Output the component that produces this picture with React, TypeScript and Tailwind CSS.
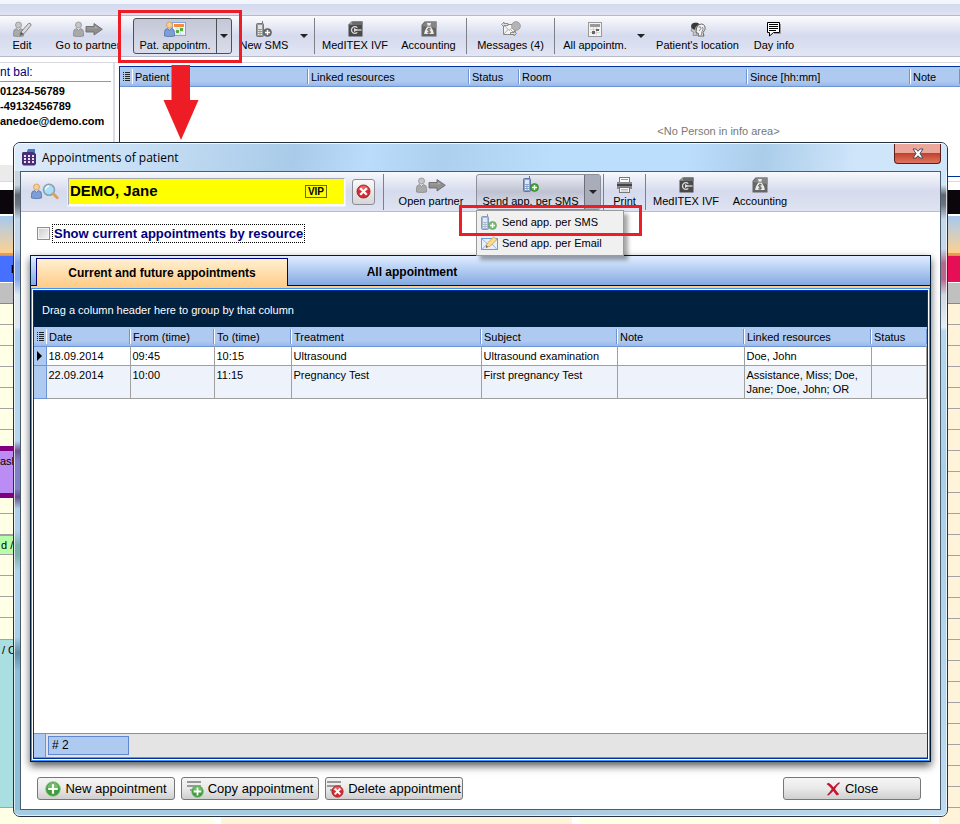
import type { ReactNode } from 'react'
import clsx from 'clsx'

type Row = {
  date: string
  from: string
  to: string
  treatment: string
  subject: string
  note: string
  resources: string
  status: string
}

const ROWS: Row[] = [
  { date: '18.09.2014', from: '09:45', to: '10:15', treatment: 'Ultrasound', subject: 'Ultrasound examination', note: '', resources: 'Doe, John', status: '' },
  { date: '22.09.2014', from: '10:00', to: '11:15', treatment: 'Pregnancy Test', subject: 'First pregnancy Test', note: '', resources: 'Assistance, Miss; Doe, Jane; Doe, John; OR', status: '' },
]

const COLUMNS = [
  { label: 'Date',             w: 'w-[84px]' },
  { label: 'From (time)',      w: 'w-[84px]' },
  { label: 'To (time)',        w: 'w-[77px]' },
  { label: 'Treatment',        w: 'w-[190px]' },
  { label: 'Subject',          w: 'w-[136px]' },
  { label: 'Note',             w: 'w-[127px]' },
  { label: 'Linked resources', w: 'w-[127px]' },
  { label: 'Status',           w: '' },
]

const INFO_COLUMNS = [
  { label: 'Patient',          w: 'w-[176px]' },
  { label: 'Linked resources', w: 'w-[161px]' },
  { label: 'Status',           w: 'w-[50px]' },
  { label: 'Room',             w: 'w-[228px]' },
  { label: 'Since [hh:mm]',    w: 'w-[163px]' },
  { label: 'Note',             w: '' },
]

/* ---------- icons ---------- */

function Person({ x = 0, color = false }: { x?: number; color?: boolean }) {
  return (
    <g transform={`translate(${x} 0)`}>
      <path d="M.5 15V11.5Q.5 8 3.5 7.6L5.5 9.4 7.5 7.6Q10.5 8 10.5 11.5V15Q5.5 16.2.5 15Z" fill={color ? '#7d9fd6' : '#a9a9a9'} stroke={color ? '#4b70b0' : '#8a8a8a'} strokeWidth=".8" />
      <circle cx="5.5" cy="4" r="3" fill={color ? '#f7cf93' : '#c6c6c6'} stroke={color ? '#d59a4c' : '#909090'} strokeWidth=".8" />
    </g>
  )
}

function EditIcon() {
  return (
    <svg width="19" height="16" viewBox="0 0 19 16">
      <Person />
      <path d="M7 14.5 8 11 15.5 2.5Q17.5 1.5 18.2 4L11 12.8Z" fill="#dcdcdc" stroke="#777" strokeWidth=".9" />
      <path d="M7 14.5 8 11 10.5 12.8Z" fill="#555" />
    </svg>
  )
}

function PartnerIcon() {
  return (
    <svg width="30" height="16" viewBox="0 0 30 16">
      <Person />
      <path d="M13 5.5H21V2.5L29.3 8.3 21 14V11H13Z" fill="#8f8f8f" stroke="#6c6c6c" strokeWidth=".9" />
      <path d="M14 6.7H22V5L25 7.3H14Z" fill="#b4b4b4" />
    </svg>
  )
}

function PatientCalendarIcon() {
  return (
    <svg width="22" height="16" viewBox="0 0 22 16">
      <rect x="8.5" y="1.5" width="13" height="13" fill="#f2f7ff" stroke="#7fa5de" />
      <rect x="10" y="3" width="10" height="3" fill="#f58d38" />
      <path d="M11 7.5H20M11 10.5H20M11 13H20M13 6V14M16.5 6V14" stroke="#c9dcf6" strokeWidth=".7" />
      <rect x="16" y="7" width="3" height="3" fill="#58ad45" />
      <rect x="12" y="9" width="3" height="3" fill="#58ad45" />
      <Person color />
    </svg>
  )
}

function PhoneIcon({ color = false }: { color?: boolean }) {
  return (
    <svg width="16" height="17" viewBox="0 0 16 17">
      <rect x="6" y="0" width="1" height="4" fill={color ? '#56709c' : '#777'} />
      <rect x=".5" y="2.5" width="7" height="13" rx="1" fill={color ? '#8aa2cc' : '#999'} stroke={color ? '#5d76a3' : '#757575'} />
      <rect x="2" y="4" width="4" height="4" fill={color ? '#dbe8fb' : '#e2e2e2'} />
      <path d="M2 9.5H6M2 11.5H6M2 13.5H6" stroke="#eee" strokeWidth="1" strokeDasharray="1 .5" />
      <circle cx="11.5" cy="11.5" r="4" fill={color ? '#43a536' : '#6d6d6d'} stroke={color ? '#2a7a22' : '#555'} strokeWidth=".6" />
      <path d="M11.5 9V14M9 11.5H14" stroke="#fff" strokeWidth="1.4" />
    </svg>
  )
}

function MedIcon() {
  return (
    <svg width="15" height="16" viewBox="0 0 15 16">
      <path d="M3.5.5H14.5V15.5H.5V3.5Z" fill="#4a4a4a" />
      <path d="M5 .5H14.5V4H1.5Z" fill="#6c6c6c" />
      <path d="M.5 3.5 3.5.5 4.5 3.5Z" fill="#9a9a9a" />
      <path d="M9.3 6.6A3.4 3.4 0 1 0 9.3 11.4" fill="none" stroke="#dcdcdc" strokeWidth="1.3" />
      <path d="M6 9H13.5" stroke="#dcdcdc" strokeWidth="1.3" />
      <path d="M6 7V11L9.5 9Z" fill="#dcdcdc" />
    </svg>
  )
}

function MoneyIcon() {
  return (
    <svg width="16" height="16" viewBox="0 0 16 16">
      <path d="M3.5.5H15.5V15.5H.5V4Z" fill="#666" />
      <path d="M5 .5H15.5V7L1 5Z" fill="#858585" />
      <path d="M6 2H10L9.2 5Q12.8 9.5 12.8 13H3.2Q3.2 9.5 6.8 5Z" fill="#ececec" />
      <path d="M6.5 5.2H9.5" stroke="#777" />
      <path d="M9.8 8Q8 7 6.8 8.1T8 10T9.2 11.6 6.2 11.7M8 6.7V12.7" fill="none" stroke="#555" strokeWidth=".9" />
    </svg>
  )
}

function MessagesIcon() {
  return (
    <svg width="20" height="16" viewBox="0 0 20 16">
      <path d="M2.5 3.5H14.5V13.5H2.5Z" fill="#f4f4f4" stroke="#8a8a8a" />
      <path d="M3 4 8 9.5 14 4M3 13 7 8.5M14 13 9.5 8.5" fill="none" stroke="#999" strokeWidth=".8" />
      <circle cx="15" cy="5" r="4.4" fill="#b4b4b4" stroke="#8f8f8f" strokeWidth=".7" />
      <path d="M13 8.8 12.5 12 16 9Z" fill="#a5a5a5" />
      <path d="M.5 3.5 3 1.2V2.5H7V4.5H3V5.8Z M15.5 12.5 13 10.2V11.5H9.5V13.5H13V14.8Z" fill="#e2e2e2" stroke="#6c6c6c" strokeWidth=".7" />
    </svg>
  )
}

function CalendarIcon() {
  return (
    <svg width="14" height="15" viewBox="0 0 14 15">
      <rect x=".5" y=".5" width="13" height="14" fill="#f3f3f3" stroke="#999" />
      <rect x="2" y="2" width="10" height="3" fill="#999" />
      <path d="M2 7.5H12M2 10.5H12M5.5 5V13M8.5 5V13" stroke="#c8c8c8" strokeWidth=".7" />
      <rect x="8" y="7" width="3" height="2" fill="#666" />
      <rect x="4" y="9" width="3" height="3" fill="#666" />
    </svg>
  )
}

function HeadsIcon() {
  return (
    <svg width="16" height="15" viewBox="0 0 16 15">
      <path d="M3 13.5 3.5 10 1 9 1.8 6Q.5 1.5 6 1 8.5 1 9 3L6 6 7 13.5Z" fill="#c4c4c4" stroke="#777" strokeWidth=".6" />
      <path d="M1.5 6Q0 .5 6.5.8 9.5 1 9.3 3.3L6 4.5 4.5 8Z" fill="#383838" />
      <path d="M8 14 8.5 11.5 6 10.5 6.5 6Q7 2 11.5 2 15.7 2.5 15 7.5L13 10.5 14 14Z" fill="#f1f1f1" stroke="#555" strokeWidth=".9" />
      <path d="M8.5 5Q11 4 11 6.5L9 9M12.5 5Q14 7 12 9.5L11.5 13" fill="none" stroke="#777" strokeWidth=".9" />
    </svg>
  )
}

function NoteIcon() {
  return (
    <svg width="14" height="15" viewBox="0 0 14 15">
      <path d="M13.5 2V11.5H7" fill="none" stroke="#999" />
      <path d="M.5.5H12.5V10.5H6.5L2.5 14V10.5H.5Z" fill="#fff" stroke="#000" />
      <path d="M2 2.5H11M2 4.5H11M2 6.5H11M2 8.5H9" stroke="#000" />
    </svg>
  )
}

function PrinterIcon() {
  return (
    <svg width="17" height="16" viewBox="0 0 17 16">
      <rect x="3.5" y=".5" width="10" height="5" fill="#fff" stroke="#777" />
      <path d="M5 2.5H12" stroke="#999" />
      <path d="M1 5H16V12H1Z" fill="#8a8a8a" />
      <rect x="1" y="7" width="15" height="2" fill="#444" />
      <rect x="3.5" y="10.5" width="10" height="5" fill="#fafafa" stroke="#777" />
      <path d="M5 12.5H12M5 14H12" stroke="#aaa" strokeWidth=".8" />
    </svg>
  )
}

function EnvelopeIcon() {
  return (
    <svg width="17" height="15" viewBox="0 0 17 15">
      <rect x=".5" y="2.5" width="16" height="11" fill="#e6f0fd" stroke="#6d9bd9" />
      <path d="M1 3 8.5 9.5 16 3M1 13.5 6 8M16 13.5 11 8" fill="none" stroke="#8fb3e4" />
      <path d="M5 11.5 5.8 8 12.5.8 16 3.5 9 10.3Z" fill="#fbdb8b" stroke="#d39d43" strokeWidth=".8" />
      <path d="M5 11.5 5.5 9.5 7 11Z" fill="#444" />
    </svg>
  )
}

function PatientSearchIcon() {
  return (
    <svg width="28" height="17" viewBox="0 0 28 17">
      <Person color />
      <circle cx="18" cy="6.7" r="5.5" fill="#a9dff9" stroke="#8ba0b1" strokeWidth="1.6" />
      <path d="M14.5 6.5Q15 3.5 18 3.2" fill="none" stroke="#fff" strokeWidth="1.3" />
      <path d="M22.2 10.8 26.2 14.8" stroke="#d8a05a" strokeWidth="2.8" strokeLinecap="round" />
    </svg>
  )
}

function CrossBadge({ size = 16 }: { size?: number }) {
  return (
    <svg width={size} height={size} viewBox="0 0 16 16">
      <circle cx="8" cy="8" r="7" fill="#d12c33" stroke="#9f161c" strokeWidth=".8" />
      <path d="M2.5 6Q4 1.8 8 1.8T13.5 6Q8 8 2.5 6Z" fill="#ea7d7f" opacity=".7" />
      <path d="M4.5 4.5 11.5 11.5M11.5 4.5 4.5 11.5" stroke="#fff" strokeWidth="2.4" />
    </svg>
  )
}

function PlusBadge({ size = 16 }: { size?: number }) {
  return (
    <svg width={size} height={size} viewBox="0 0 16 16">
      <circle cx="8" cy="8" r="7.3" fill="#3d9f3a" stroke="#8cbf88" strokeWidth=".9" />
      <path d="M2.2 6.5Q3.6 1.6 8 1.6T13.8 6.5Q8 9 2.2 6.5Z" fill="#8fd083" opacity=".6" />
      <path d="M8 3.2V12.8M3.2 8H12.8" stroke="#fff" strokeWidth="2.2" />
    </svg>
  )
}

function LinesIcon({ children }: { children: ReactNode }) {
  return (
    <span className="relative block h-4 w-[17px]">
      <svg width="17" height="16" viewBox="0 0 17 16">
        <path d="M0 1H14M0 5H14M3 9H9" stroke="#999" strokeWidth="2" />
      </svg>
      <span className="absolute top-1 left-1">{children}</span>
    </span>
  )
}

function RedCross() {
  return (
    <svg width="15" height="14" viewBox="0 0 15 14">
      <path d="M.5 2 2.5.8Q5.5 2.5 7.5 5.3 10 2 13 .3L14 1Q11 3.5 9 7 11 10 13.2 12.3L10.8 13.6Q8.8 11.5 7.3 9 5 11.5 2.5 13.6L1 13Q4 10 5.7 7 3.5 4 .5 2Z" fill="#c4122f" />
    </svg>
  )
}

function AppIcon() {
  return (
    <svg width="14" height="17" viewBox="0 0 14 17">
      <path d="M5 2 6 0H13V8H5Z" fill="#3f79c4" />
      <path d="M1 3H11L14 5V15L12.5 16.5H1.5L0 15V4Z" fill="#4c2c74" />
      <path d="M2 7H12M2 10H12M2 13H12" stroke="#e9e2f2" strokeWidth="2" strokeDasharray="2 2" />
    </svg>
  )
}

function ListMark() {
  return (
    <svg width="7" height="10" viewBox="0 0 7 10">
      <path d="M0 .5H1M2 .5H7M0 2.5H1M2 2.5H7M0 4.5H1M2 4.5H7M0 6.5H1M2 6.5H7M0 8.5H1M2 8.5H7" stroke="#222" />
    </svg>
  )
}

function DownArrow() {
  return (
    <svg width="8" height="4" viewBox="0 0 8 4">
      <path d="M0 0H8L4 4Z" fill="#222" />
    </svg>
  )
}

/* ---------- toolbar pieces ---------- */

function ToolButton({ icon, label, w }: { icon: ReactNode; label: string; w: string }) {
  return (
    <button type="button" className={clsx('flex h-9 shrink-0 flex-col items-center pt-[3px] whitespace-nowrap', w)}>
      <span className="flex h-4 items-center">{icon}</span>
      <span className="leading-4">{label}</span>
    </button>
  )
}

function ArrowButton({ label }: { label: string }) {
  return (
    <button type="button" aria-label={label} className="flex h-9 w-4 shrink-0 items-center justify-center">
      <DownArrow />
    </button>
  )
}

function Separator() {
  return <div className="mx-[2px] h-9 w-px shrink-0 bg-[#7d8089]" />
}

function HeaderLabel({ children }: { children: ReactNode }) {
  return (
    <div className="my-[2px] h-[15px] border-r border-r-[#6f94d6] border-l border-l-white pl-[2px] text-left leading-[17px] font-normal whitespace-nowrap">
      {children}
    </div>
  )
}

function ActionButton({ icon, label }: { icon: ReactNode; label: string }) {
  return (
    <button
      type="button"
      className="flex h-[23px] w-[138px] items-center justify-center gap-1 rounded-[3px] border border-[#777] bg-linear-to-b from-[#f5f5f5] via-[#e9e9e9] to-[#cfcfcf] text-[13px] leading-5 whitespace-nowrap"
    >
      {icon}
      {label}
    </button>
  )
}

/* ---------- main window ---------- */

function MainToolbar() {
  return (
    <div className="flex h-[41px] items-center border-b border-[#b6b9cc] bg-linear-to-b from-[#fbfbfe] via-[#d5daed] to-[#e2e6f4] pl-1">
      <ToolButton icon={<EditIcon />} label="Edit" w="w-9" />
      <div className="ml-2 flex">
        <ToolButton icon={<PartnerIcon />} label="Go to partner" w="w-20" />
      </div>
      <div className="relative ml-[5px] flex shrink-0 rounded-[3px] border border-[#4d5057] bg-linear-to-b from-[#c3c7d6] to-[#d9ddeb]">
        <button type="button" className="flex w-[82px] flex-col items-center pt-[2px] whitespace-nowrap">
          <span className="flex h-4 items-center"><PatientCalendarIcon /></span>
          <span className="leading-4">Pat. appointm.</span>
        </button>
        <button type="button" aria-label="More patient appointments" className="flex w-[15px] items-center justify-center border-l border-[#4d5057]">
          <DownArrow />
        </button>
        <div className="pointer-events-none absolute -top-[9px] -left-4 z-20 h-[53px] w-[124px] border-[3px] border-[#ee1c24]" />
        <svg className="pointer-events-none absolute top-[46px] left-[29px] z-20" width="36" height="75" viewBox="0 0 36 75">
          <path d="M8.5 0H27V35H35.5L18 75 .5 35H8.5Z" fill="#ee1c24" />
        </svg>
      </div>
      <ToolButton icon={<PhoneIcon />} label="New SMS" w="w-16" />
      <ArrowButton label="More SMS actions" />
      <Separator />
      <ToolButton icon={<MedIcon />} label="MedITEX IVF" w="w-[76px]" />
      <ToolButton icon={<MoneyIcon />} label="Accounting" w="w-[71px]" />
      <Separator />
      <ToolButton icon={<MessagesIcon />} label="Messages (4)" w="w-[83px]" />
      <Separator />
      <ToolButton icon={<CalendarIcon />} label="All appointm." w="w-[76px]" />
      <ArrowButton label="More appointments" />
      <ToolButton icon={<HeadsIcon />} label="Patient's location" w="w-[97px]" />
      <ToolButton icon={<NoteIcon />} label="Day info" w="w-[56px]" />
    </div>
  )
}

function InfoArea() {
  return (
    <div className="flex h-[120px] border-y border-[#d8d9e2] bg-white">
      <div className="w-[115px] shrink-0 overflow-hidden border-r-2 border-[#dcdde5] whitespace-nowrap">
        <div className="mr-[2px] h-[19px] border-b border-[#999] text-[12px] leading-[18px] text-[#00007d]">nt bal:</div>
        <div className="pt-[2px] font-bold">
          <p className="leading-[15px]">01234-56789</p>
          <p className="leading-[15px]">-49132456789</p>
          <p className="leading-[15px]">anedoe@demo.com</p>
        </div>
        <div className="mt-9 h-4 bg-[#ebebeb]" />
      </div>
      <div className="mt-[3px] mb-1 ml-1 flex-1 overflow-hidden border-y border-l border-[#00309c]">
        <table className="w-full table-fixed border-collapse">
          <thead>
            <tr className="border-b border-[#6f94d6] bg-linear-to-b from-[#afcaf0] from-75% to-[#98b8ea]">
              <th className="w-3 p-0" aria-label="Row marker"><div className="flex justify-center"><ListMark /></div></th>
              {INFO_COLUMNS.map((col) => (
                <th key={col.label} className={clsx('p-0', col.w)}>
                  <HeaderLabel>{col.label}</HeaderLabel>
                </th>
              ))}
            </tr>
          </thead>
        </table>
        <p className="mt-9 pr-[3px] pl-[360px] text-center leading-4 text-[#777]">&lt;No Person in info area&gt;</p>
      </div>
    </div>
  )
}

function HourRows({ count }: { count: number }) {
  return (
    <>
      {Array.from({ length: count }, (_, i) => (
        <div key={i} className="h-[21px] shrink-0 border-b border-[#a3a3a3]" />
      ))}
    </>
  )
}

function CalendarColumn({ w, head, tint, name, children }: { w: string; head: string; tint: string; name?: string; children?: ReactNode }) {
  return (
    <div className={clsx('flex flex-col overflow-hidden', w)}>
      <div className="h-6 shrink-0 bg-[#0b060b]" />
      <div className="mt-[2px] h-[37px] shrink-0 bg-linear-to-b from-[#a5c8ee] to-[#fdd08c]" />
      <div className="h-[3px] shrink-0 border-t-2 border-[#e99a55] bg-[#a0a0a0]" />
      <div className={clsx('h-[26px] shrink-0 pl-[11px] leading-[26px] font-bold', head)}>{name}</div>
      <div className="mt-px h-[21px] shrink-0 border-b border-[#888] bg-[#c0c0c0]" />
      <div className={clsx('flex flex-1 flex-col', tint)}>{children ?? <HourRows count={24} />}</div>
    </div>
  )
}

function Calendar() {
  return (
    <div className="flex flex-1 gap-2 bg-white pt-2">
      <CalendarColumn w="w-[213px] shrink-0" head="bg-[#4670ff]" tint="bg-[#ffffe6]" name="Dr. Doe">
        <HourRows count={6} />
        <div className="h-4" />
        <div className="h-[52px] border-y-[5px] border-[#800080] bg-[#ba8cf4] pt-[3px] leading-[15px]">ash</div>
        <div className="h-4 border-b border-[#a3a3a3]" />
        <HourRows count={1} />
        <div className="h-5 border-y border-[#a3a3a3] bg-[#b6ffa6] pl-px leading-[18px]">d / OR</div>
        <HourRows count={3} />
        <div className="h-[21px]" />
        <div className="h-[169px] border-y border-[#a3a3a3] bg-[#a9dfe1] pt-[2px] pl-[2px] leading-4">/ Consultation</div>
      </CalendarColumn>
      <CalendarColumn w="flex-1" head="bg-[#e60f55]" tint="bg-[#fff3da]" />
      <CalendarColumn w="flex-1" head="bg-[#4670ff]" tint="bg-[#ffffe6]" />
      <CalendarColumn w="w-[21px] shrink-0" head="bg-[#e60f55]" tint="bg-[#fff3da]" />
    </div>
  )
}

/* ---------- dialog ---------- */

function SendMenu() {
  return (
    <div className="absolute top-[35px] -left-px z-20 w-[148px] border border-[#9a9a9a] bg-[#f0f0f0] py-px shadow-[4px_4px_4px_rgba(0,0,0,0.35)]">
      <button type="button" className="flex h-[21px] w-full items-center gap-1 pl-1 whitespace-nowrap">
        <span className="w-[17px] opacity-70"><PhoneIcon color /></span>
        Send app. per SMS
      </button>
      <button type="button" className="flex h-[21px] w-full items-center gap-1 pl-1 whitespace-nowrap">
        <EnvelopeIcon />
        Send app. per Email
      </button>
      <div className="pointer-events-none absolute -top-[6px] -left-[18px] h-[31px] w-[183px] border-[3px] border-[#ee1c24]" />
    </div>
  )
}

function DialogToolbar() {
  return (
    <div className="flex h-10 items-center border-b border-[#b9bccf] bg-linear-to-b from-[#f8f9fd] via-[#d5daed] to-[#dfe3f2] pl-[10px]">
      <PatientSearchIcon />
      <div className="ml-[9px] flex h-7 w-[277px] items-center border-t border-r border-b-2 border-l border-t-[#a7a9b3] border-r-white border-b-white border-l-[#a7a9b3] bg-[#ffff00] pr-[17px] outline outline-[#eceef6]">
        <input type="text" aria-label="Patient" defaultValue="DEMO, Jane" className="min-w-0 flex-1 bg-transparent pl-px text-[15px] leading-6 font-bold outline-none" />
        <span className="border border-[#6b6b00] px-[2px] text-[10px] leading-[11px] font-bold">VIP</span>
      </div>
      <button type="button" aria-label="Clear patient" className="ml-[7px] flex h-[26px] w-[23px] shrink-0 items-center justify-center rounded-[3px] border border-[#8b8d95] bg-linear-to-b from-[#fafafa] to-[#d6d6da]">
        <CrossBadge size={15} />
      </button>
      <div className="ml-[6px] flex"><Separator /></div>
      <div className="ml-[5px] flex">
        <ToolButton icon={<PartnerIcon />} label="Open partner" w="w-20" />
      </div>
      <div className="relative ml-[5px] flex h-9 shrink-0 rounded-[3px] border border-[#8d909b] bg-linear-to-b from-[#e9ebf4] via-[#bfc3d1] to-[#dfe2ee]">
        <button type="button" className="flex w-[107px] flex-col items-center pt-[2px] whitespace-nowrap">
          <span className="flex h-4 items-center"><PhoneIcon color /></span>
          <span className="leading-4">Send app. per SMS</span>
        </button>
        <button type="button" aria-label="Choose how to send" className="flex w-4 items-center justify-center border-l border-[#6d707a] bg-[#a9adba]">
          <DownArrow />
        </button>
        <SendMenu />
      </div>
      <Separator />
      <ToolButton icon={<PrinterIcon />} label="Print" w="w-[37px]" />
      <Separator />
      <ToolButton icon={<MedIcon />} label="MedITEX IVF" w="w-[76px]" />
      <ToolButton icon={<MoneyIcon />} label="Accounting" w="w-[72px]" />
    </div>
  )
}

function AppointmentTable() {
  return (
    <table className="w-full table-fixed border-collapse">
      <thead>
        <tr className="border-b border-[#6f94d6] bg-linear-to-b from-[#afcaf0] from-75% to-[#98b8ea]">
          <th className="w-3 p-0" aria-label="Row marker"><div className="flex justify-center"><ListMark /></div></th>
          {COLUMNS.map((col) => (
            <th key={col.label} className={clsx('p-0', col.w)}>
              <HeaderLabel>{col.label}</HeaderLabel>
            </th>
          ))}
        </tr>
      </thead>
      <tbody>
        {ROWS.map((row, i) => (
          <tr key={row.date} className={i % 2 ? 'bg-[#eef3fb]' : 'bg-white'}>
            <td className="border-r border-b border-[#6f94d6] bg-[#afcaf0] p-0">
              {i === 0 && (
                <svg className="mx-auto" width="5" height="10" viewBox="0 0 5 10"><path d="M0 0 5 5 0 10Z" fill="#000" /></svg>
              )}
            </td>
            {[row.date, row.from, row.to, row.treatment, row.subject, row.note, row.resources, row.status].map((text, c) => (
              <td key={c} className="border-r border-b border-[#a0a0a0] px-[2px] py-[2px] align-top leading-[14px]">
                {text}
              </td>
            ))}
          </tr>
        ))}
      </tbody>
    </table>
  )
}

function AppointmentPanel() {
  return (
    <div className="mx-[9px] mt-3 flex flex-1 flex-col border border-[#001c38] bg-[#3c92f5] shadow-[0_4px_8px_rgba(0,0,0,0.65)]">
      <div className="flex h-[30px] items-end border-b border-[#00007d] bg-linear-to-b from-[#e0edff] to-[#84a9e2] pl-[5px] text-[12px] font-bold" role="tablist">
        <button type="button" role="tab" aria-selected="true" className="-mb-px h-7 w-[252px] border border-b-0 border-[#00007d] bg-linear-to-b from-[#fff0d0] to-[#ffcd8a]">
          Current and future appointments
        </button>
        <button type="button" role="tab" aria-selected="false" className="h-7 w-[248px] pt-[2px]">
          All appointment
        </button>
      </div>
      <div className="h-[2px] bg-[#ffcd8a]" />
      <div className="m-px flex flex-1 flex-col border border-white">
        <div className="flex flex-1 flex-col border border-[#00309c] bg-white">
          <p className="h-9 bg-[#00203f] pl-2 leading-[38px] text-white">Drag a column header here to group by that column</p>
          <AppointmentTable />
          <div className="mt-auto flex h-[25px] border-y border-[#6f94d6] bg-[#e4e4e4]">
            <div className="w-3 border-r border-[#6f94d6] bg-[#afcaf0]" />
            <div className="my-[2px] ml-[2px] w-[81px] border border-[#5f86d0] bg-[#afcaf0] pl-[3px] text-[12px] leading-[17px]"># 2</div>
          </div>
        </div>
      </div>
    </div>
  )
}

function AppointmentsDialog() {
  return (
    <section
      aria-label="Appointments of patient"
      className="absolute top-[142px] right-3 bottom-[7px] left-[13px] z-10 flex flex-col rounded-[7px] border border-[#26333f] bg-[#b4d3ea]"
    >
      <header className="flex h-7 shrink-0 items-center rounded-t-[6px] border-t border-l border-white/80 bg-[linear-gradient(100deg,#dcebfa,#c9e0f5_12%,#a9cbe9_30%,#bbdcfb_38%,#acd0ee_46%,#bcdefd_58%,#bcdefd_72%,#abcdea_80%,#cfe5fa_90%)] pr-[6px] pl-[7px]">
        <AppIcon />
        <h1 className="ml-[6px] font-['Open_Sans','Noto_Sans',sans-serif] text-[12px]">Appointments of patient</h1>
        <button
          type="button"
          aria-label="Close window"
          className="ml-auto flex h-5 w-[47px] items-center justify-center self-start rounded-b-[4px] border border-t-0 border-[#5b1d17] bg-linear-to-b from-[#eba79b] from-45% via-[#c5402c] via-50% to-[#dd7560]"
        >
          <svg width="12" height="11" viewBox="0 0 12 11">
            <path d="M1 1H4L6 3.3 8 1H11L8 5.5 11 10H8L6 7.7 4 10H1L4 5.5Z" fill="#fff" stroke="#444b5c" strokeWidth="1" />
          </svg>
        </button>
      </header>
      <div className="flex flex-1">
        <div className="w-[6px] border-l border-white/70 bg-[linear-gradient(#c9d6e2,#c9d6e2_14px,#5e666f_24px,#6d7680_34px,#c5d8ea_48px,#c5d8ea_78px,#86a8ee_92px,#86a8ee_108px,#dfe8f0_124px,#dfe8f0_156px,#b6d7ee_160px,#b6d7ee_270px,#6c5590_280px,#7f80c8_290px,#7f80c8_318px,#605088_326px,#b0d0ea_338px,#b0d0ea_360px,#7cb0aa_374px,#7cb0aa_384px,#b0d4ec_400px,#a9cfe8_466px,#5f8ea5_482px,#8dbfdb_500px,#8dbfdb)]" />
        <div className="flex flex-1 flex-col border border-[#4b5c6c] bg-white">
          <DialogToolbar />
          <div className="mt-3 flex h-[19px] items-center gap-[2px] pl-4">
            <input
              id="by-resource"
              type="checkbox"
              className="size-[13px] appearance-none border border-[#8e8f8f] bg-linear-to-br from-[#c9cdd2] to-[#f6f6f6] outline-1 -outline-offset-2 outline-[#f4f4f4]"
            />
            <label htmlFor="by-resource" className="border border-dotted border-black px-px text-[13px] leading-[17px] font-bold text-[#00007d]">
              Show current appointments by resource
            </label>
          </div>
          <AppointmentPanel />
          <div className="mt-[15px] mb-[9px] flex gap-[6px] pr-[19px] pl-4">
            <ActionButton icon={<PlusBadge />} label="New appointment" />
            <ActionButton icon={<LinesIcon><PlusBadge size={13} /></LinesIcon>} label="Copy appointment" />
            <ActionButton icon={<LinesIcon><CrossBadge size={13} /></LinesIcon>} label="Delete appointment" />
            <div className="ml-auto">
              <ActionButton icon={<RedCross />} label="Close" />
            </div>
          </div>
        </div>
        <div className="w-[6px] border-r border-white/70 bg-[linear-gradient(#cfe5fa,#cfe5fa_14px,#5e666f_24px,#6d7680_34px,#c5d8ea_48px,#c5d8ea_78px,#b8668e_92px,#b8668e_108px,#cfd8e2_124px,#e4edf5_156px,#b6d7ee_160px,#a9cfe8_300px,#bcdaf0)]" />
      </div>
      <div className="h-[6px] shrink-0 rounded-b-[6px] border-b border-white/70 bg-linear-to-r from-[#a5cbe4] via-[#a9c8dc] to-[#bcdaf0]" />
    </section>
  )
}

export default function App() {
  return (
    <main className="relative flex min-h-screen flex-col overflow-hidden bg-white font-['Liberation_Sans',Arial,sans-serif] text-[11px] text-black">
      <div className="h-1 bg-[#f2f5fb]" />
      <div className="h-3 border-b border-[#b6b9cc] bg-linear-to-b from-[#d3d9ed] to-[#dfe3f2]" />
      <MainToolbar />
      <div className="h-[5px] bg-white" />
      <InfoArea />
      <Calendar />
      <AppointmentsDialog />
    </main>
  )
}
